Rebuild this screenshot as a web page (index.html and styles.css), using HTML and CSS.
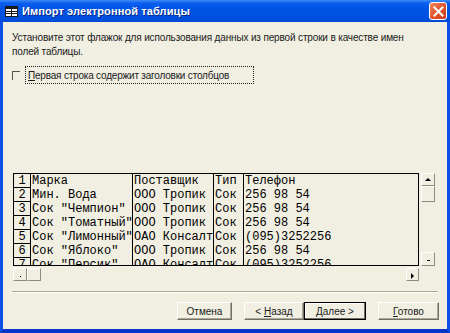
FILE: index.html
```html
<!DOCTYPE html>
<html lang="ru">
<head>
<meta charset="utf-8">
<title>Импорт электронной таблицы</title>
<link rel="stylesheet" href="styles.css">
</head>
<body>
<div class="win">
  <div class="titlebar">
    <svg class="ticon" width="13" height="11" viewBox="0 0 13 11">
      <rect x="0.5" y="0.5" width="12" height="10" fill="#fff" stroke="#1a1a1a"/>
      <rect x="1" y="1" width="11" height="2" fill="#1a1a1a"/>
      <line x1="6.5" y1="3" x2="6.5" y2="10" stroke="#1a1a1a"/>
      <line x1="1" y1="5.5" x2="12" y2="5.5" stroke="#1a1a1a"/>
      <line x1="1" y1="7.5" x2="12" y2="7.5" stroke="#1a1a1a"/>
    </svg>
    <span class="ttext">Импорт электронной таблицы</span>
    <div class="close">
      <svg width="11" height="11" viewBox="0 0 11 11"><path d="M1.5 1.5 L9.5 9.5 M9.5 1.5 L1.5 9.5" stroke="#fff" stroke-width="2" stroke-linecap="square"/></svg>
    </div>
  </div>
  <div class="body">
    <p class="intro">Установите этот флажок для использования данных из первой строки в качестве имен<br>полей таблицы.</p>
    <div class="chkrow"><span class="chk"></span><span class="focus"><u>П</u>ервая строка содержит заголовки столбцов</span></div>
    <div class="gridarea">
      <div class="sheet">
        <div class="row"><span class="c n">1</span><span class="c a">Марка</span><span class="c b">Поставщик</span><span class="c t">Тип</span><span class="c p">Телефон</span></div>
        <div class="row"><span class="c n">2</span><span class="c a">Мин. Вода</span><span class="c b">ООО Тропик</span><span class="c t">Сок</span><span class="c p">256 98 54</span></div>
        <div class="row"><span class="c n">3</span><span class="c a">Сок "Чемпион"</span><span class="c b">ООО Тропик</span><span class="c t">Сок</span><span class="c p">256 98 54</span></div>
        <div class="row"><span class="c n">4</span><span class="c a">Сок "Томатный"</span><span class="c b">ООО Тропик</span><span class="c t">Сок</span><span class="c p">256 98 54</span></div>
        <div class="row"><span class="c n">5</span><span class="c a">Сок "Лимонный"</span><span class="c b">ОАО Консалт</span><span class="c t">Сок</span><span class="c p">(095)3252256</span></div>
        <div class="row"><span class="c n">6</span><span class="c a">Сок "Яблоко"</span><span class="c b">ООО Тропик</span><span class="c t">Сок</span><span class="c p">256 98 54</span></div>
        <div class="row"><span class="c n">7</span><span class="c a">Сок "Персик"</span><span class="c b">ОАО Консалт</span><span class="c t">Сок</span><span class="c p">(095)3252256</span></div>
      </div>
      <div class="vscroll">
        <div class="sb up"><span class="tri-up"></span></div>
        <div class="sb vthumb"></div>
        <div class="vspace"></div>
        <div class="sb down"><span class="tri-down"></span></div>
      </div>
      <div class="hscroll">
        <div class="sb left"><span class="tri-left"></span></div>
        <div class="sb hthumb"></div>
        <div class="hspace"></div>
        <div class="sb right"><span class="tri-right"></span></div>
      </div>
    </div>
    <div class="sep"></div>
    <div class="buttons">
      <button class="btn w55">Отмена</button>
      <button class="btn w60 ml12">&lt; <u>Н</u>азад</button>
      <button class="btn w62 def"><u>Д</u>алее &gt;</button>
      <button class="btn w61 ml12"><u>Г</u>отово</button>
    </div>
  </div>
</div>
</body>
</html>
```

FILE: styles.css
```css
* { box-sizing: border-box; }
html, body { margin: 0; padding: 0; }
body { width: 450px; height: 333px; overflow: hidden; background: #0d4fe6; font-family: "Liberation Sans", Arial, sans-serif; }

.win { width: 450px; height: 333px; display: flex; flex-direction: column; }

.titlebar {
  height: 22px; flex: none;
  display: flex; align-items: center;
  background: linear-gradient(#3d8cf8 0, #0d5ff0 3px, #0055e6 8px, #0052e0 16px, #0049d6 22px);
  padding-left: 5px; padding-right: 3px;
}
.ticon { flex: none; display: block; }
.ttext { color: #fff; font-weight: bold; font-size: 11px; margin-left: 4px; letter-spacing: 0.1px; text-shadow: 1px 1px 0 #0a2a8a; }
.close {
  margin-left: auto; width: 18px; height: 18px;
  border: 1px solid #fff; border-radius: 3px;
  background: linear-gradient(135deg, #f08a62, #e0512a 55%, #c9401f);
  display: flex; align-items: center; justify-content: center;
}
.close svg { display: block; }

.body {
  flex: 1; background: #f1efe2;
  border-left: 3px solid #0d4fe6; border-right: 3px solid #0d4fe6; border-bottom: 4px solid #0637c8;
  display: flex; flex-direction: column;
}

.intro { margin: 9px 0 0 9px; font-size: 10px; line-height: 14px; color: #1a1a1a; white-space: nowrap; letter-spacing: -0.15px; }

.chkrow { margin: 7px 0 0 9px; height: 18px; display: flex; align-items: center; }
.chk { width: 8px; height: 9px; border-top: 1px solid #555; border-left: 1px solid #555; margin-right: 5px; margin-top: 1px; }
.focus { width: 229px; height: 18px; border: 1px dotted #222; display: flex; align-items: center; padding-left: 2px; font-size: 10px; color: #1a1a1a; white-space: nowrap; letter-spacing: -0.2px; }

.gridarea { margin: 89px 0 0 10px; display: grid; grid-template-columns: 406px 14px; column-gap: 2px; row-gap: 2px; }

.sheet { height: 93px; border: 1px solid #000; overflow: hidden; background: #f1efe2; font-family: "Liberation Mono", "Courier New", monospace; font-size: 12px; color: #000; }
.row { display: flex; height: 14px; }
.c { display: block; height: 14px; line-height: 15px; white-space: nowrap; overflow: hidden; padding-left: 1px; }
.n { width: 17px; border-right: 1px solid #000; border-bottom: 1px solid #000; text-align: center; padding-left: 0; line-height: 14px; }
.a { width: 102px; border-right: 1px solid #000; }
.b { width: 81px; border-right: 1px solid #000; }
.t { width: 30px; border-right: 1px solid #000; }
.p { width: 174px; }

.vscroll { height: 93px; display: flex; flex-direction: column; }
.sb { background: #f1efe2; border-top: 1px solid #fff; border-left: 1px solid #fff; border-right: 1px solid #8f8c80; border-bottom: 1px solid #8f8c80; display: flex; align-items: center; justify-content: center; }
.up { height: 13px; }
.vthumb { height: 16px; }
.vspace { flex: 1; }
.down { height: 14px; }

.hscroll { height: 13px; display: flex; }
.left { width: 14px; }
.hthumb { width: 14px; }
.hspace { flex: 1; }
.right { width: 13px; }

.tri-up { width: 0; height: 0; border-left: 3px solid transparent; border-right: 3px solid transparent; border-bottom: 3px solid #000; }
.tri-down { width: 3px; height: 1px; background: #000; margin-top: 2px; }
.tri-left { width: 1px; height: 1px; background: #000; margin-top: 4px; }
.tri-right { width: 0; height: 0; border-top: 3px solid transparent; border-bottom: 3px solid transparent; border-left: 3px solid #000; margin-top: 2px; }

.sep { margin: 10px 0 0 9px; width: 426px; height: 2px; border-top: 1px solid #aca899; border-bottom: 1px solid #fff; }

.buttons { margin: 9px 0 0 174px; display: flex; }
.btn {
  height: 18px; padding: 0; margin: 0;
  background: #f1efe2; font-family: "Liberation Sans", Arial, sans-serif; font-size: 10px; color: #1a1a1a;
  border-top: 1px solid #fff; border-left: 1px solid #fff; border-right: 1px solid #716f64; border-bottom: 1px solid #716f64;
  box-shadow: inset -1px -1px 0 #aca899;
}
.def { border: 1px solid #000; box-shadow: inset -1px -1px 0 #716f64, inset 1px 1px 0 #fff; }
.w55 { width: 55px; }
.w60 { width: 60px; }
.w62 { width: 62px; }
.w61 { width: 61px; }
.ml12 { margin-left: 12px; }
```
